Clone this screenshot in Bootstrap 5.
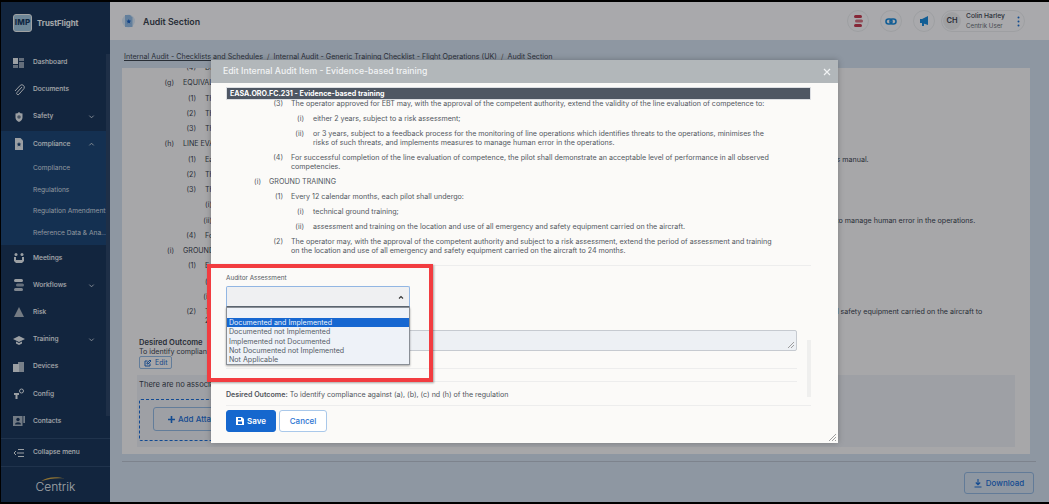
<!DOCTYPE html>
<html lang="en">
<head>
<meta charset="utf-8">
<title>Audit Section</title>
<link rel="stylesheet" href="https://cdn.jsdelivr.net/npm/bootstrap@5.3.0/dist/css/bootstrap.min.css">
<style>
html,body{height:504px;overflow:hidden;background:#000;margin:0}
body{font-family:Inter,"Liberation Sans",sans-serif;font-size:7.12px;line-height:9px;color:#3a4350}
.shell{position:relative;height:504px;padding:2px 0 2px 1px;overflow:hidden}
.frame{height:500px;background:#ccd8e9}
.side{width:109px;background:#1a365a;color:#dfe4ea;font-size:6.6px;font-weight:500}
.brand{height:42px;padding:0 0 0 12px;gap:5px;font-size:7.8px;font-weight:700;color:#eef1f4}
.logo{width:19px;height:18px;border:1.5px solid #e5e8ea;border-radius:3px;background:#9cc0d8;color:#183a60;font-size:8px;font-weight:800;letter-spacing:.2px;text-align:center;line-height:15px}
.nav-wrap{position:relative;padding-top:5px;padding-right:4px}
.sitem{height:27.2px;padding-left:12px;gap:8px;color:#eef1f5}
.sitem svg{width:12px;height:12px;flex:none}
.sitem .lab{flex:1}
.sitem.collapse-row{height:27px}
.chev{width:7px!important;height:7px!important;margin-right:11px}
.grp{background:#1d4674}
.sub{height:21.7px;padding-left:32px;color:#cfd7e0;white-space:nowrap;overflow:hidden;font-weight:400}
.sbar{position:absolute;right:0;top:10px;width:4px;height:362px;background:#2b4466}
.rule{border-top:1px solid #2f4a6e;margin:0}
.logo2{height:35px;padding-top:3px;color:#e8ecf0;font-size:12px;font-weight:300;position:relative}
.logo2 svg{position:absolute;left:40px;top:9px}
.top{height:38px;background:#f2f3f7;padding:0 24px 0 12px;color:#3a4350;font-size:8.8px;font-weight:600}
.ticons{gap:11px}
.ticon{width:22px;height:22px;border-radius:50%;border:1px solid #e3e4e8;display:flex;align-items:center;justify-content:center}
.user{height:22px;width:84px;border-radius:11px;border:1px solid #e3e4e8;gap:5px;font-weight:500;font-size:6.7px;line-height:9px;margin-left:6px}
.who2{font-weight:400;color:#676d76;font-size:6.2px}
.init{width:18px;height:18px;border-radius:50%;background:#e4e5e9;font-size:7.5px;font-weight:600;color:#3a4350;text-align:center;line-height:18px;margin-left:1px}
.crumb{height:28px;padding:12px 0 0 14px;font-size:7.15px;color:#3b4450;white-space:nowrap}
.crumb a{color:#3b4450}
.crumb i{font-style:normal;padding:0 4px;color:#666}
.paper{background:#f0f0f3;margin:0 19px 0 12px;height:386px;overflow:hidden;position:relative}
.ln{display:flex;margin-bottom:6.27px}
.ln b{font-weight:400;flex:none;text-align:right;padding-right:9px}
.l0 b{width:61px}.l1 b{width:83px}.l2 b{width:99px}
.ln span{max-width:780px}
.stack{margin-top:-5px}
.out{position:absolute;left:17px;top:270px;width:200px}
.out strong{font-weight:600;font-size:7.6px;display:block}
.edit{font-size:7px;padding:1px 4px;line-height:9px;border-radius:2px;--bs-btn-color:#2269c5;--bs-btn-border-color:#8fb4dd;display:inline-flex;gap:3px;align-items:center}
.tray{position:absolute;left:15px;right:15px;top:307px;height:72px;background:#e3e6ed;padding:5px 2px;font-size:7.6px}
.drop{margin-top:10px;height:42px;width:440px;border:1.5px dashed #1a6bd2;border-radius:2px;padding:7px 13px}
.add{height:24px;width:120px;font-size:8px;font-weight:500;border-radius:3px;--bs-btn-color:#1c6ccf;--bs-btn-border-color:#8fb4dd;padding:0 14px;display:inline-flex;align-items:center;gap:3px;white-space:nowrap}
.foot{margin:7px 13px 0 12px;border-top:1px solid #b3bccb;height:34px;padding:10px 2px 0 0}
.dl{width:70px;height:22px;font-size:8px;font-weight:500;padding:0;--bs-btn-color:#1c6ccf;--bs-btn-border-color:#8db1da;display:flex;align-items:center;justify-content:center;gap:4px;border-radius:3px}
.scrim{position:absolute;inset:0;background:rgba(0,0,0,.3)}
.dlg{position:absolute;left:211px;top:60px;width:627px;height:383px;background:#fbfaf8;border:0;border-radius:0;box-shadow:0 0 6px rgba(0,0,0,.25);font-size:7.12px;color:#52575e}
.dhead{height:23px;background:#b2b7ba;color:#f1f3f4;font-size:8.7px;font-weight:500;padding:0 7px 0 12px}
.x{width:8px;height:8px}
.dbody{padding:4px 27px 0 15px}
.bar{background:#4f5763;color:#fff;font-weight:700;font-size:7.1px;height:13px;line-height:12px;padding-left:3px;border:1px solid #dcdee2}
.txt{height:167px;margin-top:-1px;border-bottom:1px solid #ededed;overflow:hidden}
.txt .l0 b{width:43px;padding-right:8px}.txt .l1 b{width:65px;padding-right:8px}.txt .l2 b{width:87px}
.txt .ln{margin-bottom:6px}
.w475{max-width:460px!important}.w500{max-width:495px!important}.w490{max-width:485px!important}
.lbl{font-size:6.4px;margin-top:8px;height:9px;color:#555b62}
.sel{position:relative;width:184px;height:21px;margin-top:3px;background:#eff0f2;border:1px solid #92b6e3;border-bottom-color:#5d6772;border-radius:2px 2px 0 0}
.sel svg{position:absolute;right:5px;top:8px;width:6px;height:5px}
.opts{position:absolute;left:-1px;top:20px;width:184px;background:#eef2f8;border:1px solid #8a8f96;box-shadow:0 1px 2px rgba(0,0,0,.35);padding-top:10px;font-size:7.1px;line-height:9.3px;color:#555c66;z-index:3}
.opts div{padding-left:2px}
.opts .on{background:#1667d1;color:#eef4fc}
.area{position:relative;height:21px;width:571px;margin-top:23px;background:#edf0f4;border:1px solid #c6cad0;border-radius:2px}
.dhr{border-top:1px solid #ededed;width:571px;margin-top:17px}
.dhr2{margin-top:12px}
.dout{padding-top:8px;height:23px;font-size:7.1px;color:#50555c}
.dout strong{font-weight:600}
.acts{border-top:1px solid #ededed;padding-top:4px;gap:3px}
.save{width:50px;height:22px;font-size:8px;font-weight:600;padding:0;border-radius:3px;--bs-btn-bg:#1567ce;--bs-btn-border-color:#1567ce;display:flex;align-items:center;justify-content:center;gap:3px}
.cancel{width:48px;height:22px;font-size:8px;font-weight:500;padding:0;border-radius:3px;--bs-btn-color:#2a74d2;--bs-btn-border-color:#a9c8ea;background:#fff}
.thumb{position:absolute;left:596px;top:280px;width:4px;height:57px;background:#efefee}
.grip{position:absolute;right:2px;bottom:2px;width:7px;height:7px}
.redbox{position:absolute;left:207px;top:264px;width:226px;height:118px;border:4px solid #f23c40;box-shadow:1px 1px 2px rgba(0,0,0,.35);z-index:4;pointer-events:none}
</style>
</head>
<body>
<div class="shell">
  <div class="frame d-flex">
    <aside class="side d-flex flex-column flex-shrink-0">
      <div class="brand d-flex align-items-center"><div class="logo">IMP</div>TrustFlight</div>
      <div class="nav-wrap flex-grow-1">
        <div class="sbar"></div>
        <div class="sitem d-flex align-items-center"><svg viewBox="0 0 12 12" fill="#dfe4ea"><rect x="0" y="1" width="5" height="6"/><rect x="6" y="1" width="5" height="3" opacity=".6"/><rect x="6" y="5" width="5" height="6" opacity=".6"/><rect x="0" y="8" width="5" height="3" opacity=".6"/></svg><span class="lab">Dashboard</span></div>
        <div class="sitem d-flex align-items-center"><svg viewBox="0 0 12 12" fill="none" stroke="#dfe4ea"><path d="M9 3 4 8.500a1.300 1.300 0 0 0 2 1.700L11 4.500a2.500 2.500 0 0 0-3.700-3.200L2 7"/></svg><span class="lab">Documents</span></div>
        <div class="sitem d-flex align-items-center"><svg viewBox="0 0 12 12" fill="#dfe4ea"><path d="M6 1l1.500 1.200 2 .3v4c0 2-1.700 3.500-3.500 4.500-1.800-1-3.500-2.500-3.500-4.500v-4l2-.3z"/><circle cx="6" cy="6" r="1.800" fill="#6b7b90"/></svg><span class="lab">Safety</span><svg class="chev" viewBox="0 0 8 8" fill="none" stroke="#cfd7e0"><path d="M1.500 3 4 5.500 6.500 3"/></svg></div>
        <div class="grp">
          <div class="sitem d-flex align-items-center"><svg viewBox="0 0 12 12" fill="#dfe4ea"><path d="M2 0h5.500L10 2.500V12H2z"/><path d="M6 4l.7 1.500 1.600.2-1.200 1.100.3 1.600L6 7.600l-1.400.8.300-1.600-1.200-1.100 1.600-.2z" fill="#1d4674"/></svg><span class="lab">Compliance</span><svg class="chev" viewBox="0 0 8 8" fill="none" stroke="#cfd7e0"><path d="M1.500 5 4 2.500 6.500 5"/></svg></div>
          <div class="sub d-flex align-items-center">Compliance</div>
          <div class="sub d-flex align-items-center">Regulations</div>
          <div class="sub d-flex align-items-center">Regulation Amendments</div>
          <div class="sub d-flex align-items-center">Reference Data &amp; Ana...</div>
        </div>
        <div class="sitem d-flex align-items-center"><svg viewBox="0 0 12 12" fill="#dfe4ea"><circle cx="3" cy="2.500" r="1.500"/><circle cx="9" cy="2.500" r="1.500"/><path d="M1 5h2v3h6V5h2v4L9 11H3L1 9z"/></svg><span class="lab">Meetings</span></div>
        <div class="sitem d-flex align-items-center"><svg viewBox="0 0 12 12" fill="#dfe4ea"><rect x="1" y="0" width="9" height="3" rx="1.500"/><rect x="3" y="4.500" width="8" height="3" rx="1.500" opacity=".6"/><rect x="1" y="9" width="9" height="3" rx="1.500" opacity=".8"/></svg><span class="lab">Workflows</span><svg class="chev" viewBox="0 0 8 8" fill="none" stroke="#cfd7e0"><path d="M1.500 3 4 5.500 6.500 3"/></svg></div>
        <div class="sitem d-flex align-items-center"><svg viewBox="0 0 12 12" fill="#a6b0bc"><path d="M6 1l5 10H1z"/></svg><span class="lab">Risk</span></div>
        <div class="sitem d-flex align-items-center"><svg viewBox="0 0 12 12" fill="#dfe4ea"><path d="M6 2l6 3-6 3-6-3z"/><path d="M3 7.500v2L6 11l3-1.500v-2L6 9z"/></svg><span class="lab">Training</span><svg class="chev" viewBox="0 0 8 8" fill="none" stroke="#cfd7e0"><path d="M1.500 3 4 5.500 6.500 3"/></svg></div>
        <div class="sitem d-flex align-items-center"><svg viewBox="0 0 12 12" fill="#dfe4ea"><rect x="0" y="3" width="6" height="8"/><rect x="5" y="1" width="6" height="10" opacity=".75"/></svg><span class="lab">Devices</span></div>
        <div class="sitem d-flex align-items-center"><svg viewBox="0 0 12 12" fill="#dfe4ea"><circle cx="8.500" cy="3" r="2" fill="none" stroke="#dfe4ea"/><path d="M1 5h5v2H4.500v4h-2V7H1z"/></svg><span class="lab">Config</span></div>
        <div class="sitem d-flex align-items-center"><svg viewBox="0 0 12 12" fill="#dfe4ea"><rect x="0" y="1" width="9.500" height="10" opacity=".7"/><circle cx="5" cy="4.500" r="1.700" fill="#1a365a"/><path d="M2 9.500c0-3 6-3 6 0z" fill="#1a365a"/><rect x="10.500" y="1" width="1.200" height="7"/></svg><span class="lab">Contacts</span></div>
      </div>
      <div class="rule"></div>
      <div class="sitem collapse-row d-flex align-items-center"><svg viewBox="0 0 12 12" fill="none" stroke="#dfe4ea"><path d="M4 6H11M5 2.500h6M5 9.500h6M3 4 1 6l2 2"/></svg><span class="lab">Collapse menu</span></div>
      <div class="rule"></div>
      <div class="logo2 d-flex align-items-center justify-content-center">Centrik<svg width="24" height="6" viewBox="0 0 28 7"><path d="M0 6C7 1 17 0 28 3 19 2 10 3 0 6z" fill="#c9a24a"/></svg></div>
    </aside>
    <div class="flex-grow-1 d-flex flex-column" style="min-width:0">
      <header class="top d-flex align-items-center">
        <svg width="13" height="14" viewBox="0 0 13 14" class="me-2"><circle cx="6.500" cy="7" r="6.500" fill="#d3e1f1"/><path d="M3 1h5l2.500 2.500V13H3z" fill="#8fb7e0"/><path d="M6.800 5l.7 1.600 1.700.2-1.300 1.100.4 1.700-1.500-.9-1.500.9.400-1.700-1.300-1.100 1.700-.2z" fill="#1c60c0"/></svg>
        <span class="flex-grow-1">Audit Section</span>
        <div class="ticons d-flex align-items-center">
          <div class="ticon"><svg width="9" height="12" viewBox="0 0 9 12" fill="#c0394f"><rect y="0" width="8" height="3" rx="1.500"/><rect x="1" y="4.500" width="8" height="3" rx="1.500" opacity=".7"/><rect y="9" width="8" height="3" rx="1.500"/></svg></div>
          <div class="ticon"><svg width="12" height="7" viewBox="0 0 12 7" fill="none" stroke="#1b87d6" stroke-width="1.600"><rect x="1" y="1" width="6" height="5" rx="2.500"/><rect x="5" y="1" width="6" height="5" rx="2.500"/></svg></div>
          <div class="ticon"><svg width="10" height="10" viewBox="0 0 10 10" fill="#1b87d6"><path d="M9 0v9L3 7H1V3h2z"/><rect x="3" y="7" width="2" height="3"/></svg></div>
        </div>
        <div class="user d-flex align-items-center">
          <div class="init">CH</div>
          <div class="flex-grow-1"><div>Colin Harley</div><div class="who2">Centrik User</div></div>
          <svg width="3" height="11" viewBox="0 0 3 11" fill="#1c6ccf" class="me-1"><circle cx="1.500" cy="1.500" r="1"/><circle cx="1.500" cy="5.500" r="1"/><circle cx="1.500" cy="9.500" r="1"/></svg>
        </div>
      </header>
      <nav class="crumb"><a href="#">Internal Audit - Checklists and Schedules</a><i>/</i><a href="#">Internal Audit - Generic Training Checklist - Flight Operations (UK)</a><i>/</i>Audit Section</nav>
      <main class="paper">
        <div class="stack">
          <div class="ln l1"><b>(4)</b><span>Di</span></div>
          <div class="ln l0"><b>(g)</b><span>EQUIVALENCY</span></div>
          <div class="ln l1"><b>(1)</b><span>Th</span></div>
          <div class="ln l1"><b>(2)</b><span>Th</span></div>
          <div class="ln l1"><b>(3)</b><span>Th</span></div>
          <div class="ln l0"><b>(h)</b><span>LINE EVALUATION</span></div>
          <div class="ln l1"><b>(1)</b><span>Each flight crew member shall complete a line evaluation of competence with a suitably qualified commander nominated by the operator in accordance with the procedures of the operations manual.</span></div>
          <div class="ln l1"><b>(2)</b><span>Th</span></div>
          <div class="ln l1"><b>(3)</b><span>Th</span></div>
          <div class="ln l2"><b>(i)</b><span>ei</span></div>
          <div class="ln l2"><b>(ii)</b><span>or 3 years, subject to a feedback process for the monitoring of line operations which identifies threats to the operations, minimises the risks of such threats, and implements measures to manage human error in the operations.</span></div>
          <div class="ln l1"><b>(4)</b><span>Fo</span></div>
          <div class="ln l0"><b>(i)</b><span>GROUND TRAINING</span></div>
          <div class="ln l1"><b>(1)</b><span>Ev</span></div>
          <div class="ln l2"><b>(i)</b><span>te</span></div>
          <div class="ln l2"><b>(ii)</b><span>as</span></div>
          <div class="ln l1"><b>(2)</b><span>The operator may, with the approval of the competent authority and subject to a risk assessment, extend the period of assessment and training on the location and use of all emergency and safety equipment carried on the aircraft to 24 months.</span></div>
        </div>
        <div class="out">
          <strong>Desired Outcome</strong>
          <div>To identify compliance</div>
          <button type="button" class="btn btn-outline-primary edit"><svg width="8" height="8" viewBox="0 0 8 8" fill="none" stroke="#2269c5"><path d="M6 4.500V7H1V2h2.500M3 5V3.800L6 1l1 1-3 3z"/></svg>Edit</button>
        </div>
        <div class="tray">
          <div>There are no associated attachments</div>
          <div class="drop"><button type="button" class="btn btn-outline-primary add"><svg width="7" height="7" viewBox="0 0 7 7" fill="#1c6ccf"><path d="M2.700 0h1.600v2.700H7v1.600H4.300V7H2.700V4.300H0V2.700h2.700z"/></svg>Add Attachment</button></div>
        </div>
      </main>
      <div class="foot d-flex justify-content-end">
        <button type="button" class="btn btn-outline-primary dl"><svg width="8" height="9" viewBox="0 0 8 9" fill="none" stroke="#1c6ccf" stroke-width="1.100"><path d="M4 0v5.500M1.800 3.500 4 5.700l2.200-2.200M.5 8h7"/></svg>Download</button>
      </div>
    </div>
  </div>

  <div class="scrim"></div>

  <div class="modal-content dlg" role="dialog">
    <div class="dhead d-flex align-items-center justify-content-between">
      <span>Edit Internal Audit Item - Evidence-based training</span>
      <svg class="x" viewBox="0 0 8 8" stroke="#f1f3f4" stroke-width="1.200"><path d="M1 1l6 6M7 1 1 7"/></svg>
    </div>
    <div class="dbody">
      <div class="bar">EASA.ORO.FC.231 - Evidence-based training</div>
      <div class="txt">
        <div class="ln l1"><b>(3)</b><span>The operator approved for EBT may, with the approval of the competent authority, extend the validity of the line evaluation of competence to:</span></div>
        <div class="ln l2"><b>(i)</b><span>either 2 years, subject to a risk assessment;</span></div>
        <div class="ln l2"><b>(ii)</b><span class="w475">or 3 years, subject to a feedback process for the monitoring of line operations which identifies threats to the operations, minimises the risks of such threats, and implements measures to manage human error in the operations.</span></div>
        <div class="ln l1"><b>(4)</b><span class="w500">For successful completion of the line evaluation of competence, the pilot shall demonstrate an acceptable level of performance in all observed competencies.</span></div>
        <div class="ln l0"><b>(i)</b><span>GROUND TRAINING</span></div>
        <div class="ln l1"><b>(1)</b><span>Every 12 calendar months, each pilot shall undergo:</span></div>
        <div class="ln l2"><b>(i)</b><span>technical ground training;</span></div>
        <div class="ln l2"><b>(ii)</b><span>assessment and training on the location and use of all emergency and safety equipment carried on the aircraft.</span></div>
        <div class="ln l1"><b>(2)</b><span class="w490">The operator may, with the approval of the competent authority and subject to a risk assessment, extend the period of assessment and training on the location and use of all emergency and safety equipment carried on the aircraft to 24 months.</span></div>
      </div>
      <div class="lbl">Auditor Assessment</div>
      <div class="sel">
        <svg viewBox="0 0 6 5" fill="none" stroke="#333" stroke-width="1.100"><path d="M1 3.500 3 1.500l2 2"/></svg>
        <div class="opts">
          <div class="on">Documented and Implemented</div>
          <div>Documented not Implemented</div>
          <div>Implemented not Documented</div>
          <div>Not Documented not Implemented</div>
          <div>Not Applicable</div>
        </div>
      </div>
      <div class="area"><svg class="grip" viewBox="0 0 7 7" stroke="#888" stroke-width=".8"><path d="M1 7l6-6M4 7l3-3"/></svg></div>
      <div class="dhr"></div>
      <div class="dhr dhr2"></div>
      <div class="dout"><strong>Desired Outcome:</strong> To identify compliance against (a), (b), (c) nd (h) of the regulation</div>
      <div class="acts d-flex">
        <button type="button" class="btn btn-primary save"><svg width="8" height="8" viewBox="0 0 8 8" fill="#fff"><path d="M0 0h6l2 2v6H0z"/><rect x="2" y="1" width="3" height="2" fill="#1567ce"/><rect x="2" y="4.500" width="4" height="2.500" fill="#1567ce"/></svg>Save</button>
        <button type="button" class="btn btn-outline-primary cancel">Cancel</button>
      </div>
    </div>
    <div class="thumb"></div>
    <svg class="grip" viewBox="0 0 7 7" stroke="#888" stroke-width=".8"><path d="M0 7l7-7M3 7l4-4M6 7l1-1"/></svg>
  </div>

  <div class="redbox"></div>
</div>
<script src="https://cdn.jsdelivr.net/npm/bootstrap@5.3.0/dist/js/bootstrap.bundle.min.js"></script>
</body>
</html>
